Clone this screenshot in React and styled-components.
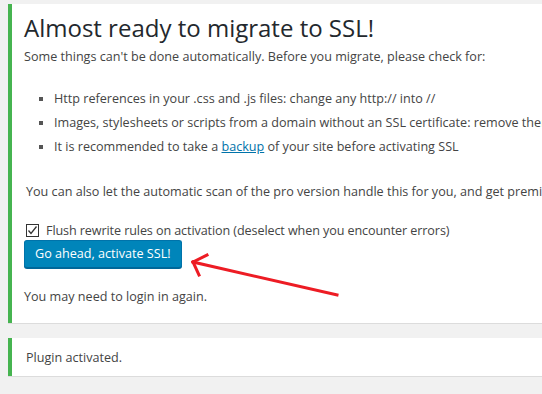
import React from "react";
import styled, { createGlobalStyle } from "styled-components";

const GlobalStyle = createGlobalStyle`
  html, body {
    margin: 0;
    padding: 0;
    background: #f1f1f1;
    overflow: hidden;
  }
  body {
    font-family: "Open Sans", "Noto Sans", sans-serif;
    font-size: 12.6px;
    color: #444;
  }
`;

const Page = styled.div`
  position: relative;
  width: 900px;
  height: 394px;
  padding: 4px 0 0 8px;
  box-sizing: border-box;
`;

const Notice = styled.div`
  background: #fff;
  border-left: 4px solid #46b450;
  box-shadow: 0 1px 0 #dcdcdc;
  padding: ${(p) => p.$pad || "0 12px 16px"};
  display: flex;
  flex-direction: column;
  align-items: flex-start;
  margin-top: ${(p) => p.$mt || "0"};
`;

const Title = styled.h1`
  font-size: 24px;
  font-weight: 400;
  line-height: 30px;
  color: #23282d;
  margin: 9px 0 0;
`;

const Text = styled.p`
  margin: ${(p) => p.$m || "0"};
  line-height: 20px;
  padding-left: ${(p) => p.$indent || "0"};
  white-space: nowrap;
`;

const List = styled.ul`
  margin: 22px 0 0;
  padding: 0 0 0 30px;
  list-style: square;
`;

const Item = styled.li`
  line-height: 20px;
  margin-bottom: 4px;
  white-space: nowrap;
  &::marker {
    color: #555;
  }
`;

const Link = styled.a`
  color: #0073aa;
  text-decoration: underline;
`;

const CheckRow = styled.label`
  display: flex;
  align-items: center;
  gap: 7px;
  margin-top: 18px;
  height: 20px;
  padding-left: 2px;
  letter-spacing: -0.1px;
`;

const Box = styled.span`
  width: 11px;
  height: 11px;
  border: 1px solid #333;
  display: inline-flex;
  align-items: center;
  justify-content: center;
  background: #fff;
`;

const Button = styled.button`
  height: 28px;
  padding: 0 10px 2px;
  background: #0085ba;
  border: 1px solid #0073aa;
  border-bottom-color: #006799;
  box-shadow: 0 1px 0 #006799;
  border-radius: 3px;
  color: #fff;
  font-family: inherit;
  font-size: 12.6px;
  cursor: pointer;
`;

const Arrow = styled.svg`
  position: absolute;
  left: 0;
  top: 0;
  pointer-events: none;
`;

export default function App() {
  return (
    <>
      <GlobalStyle />
      <Page>
        <Notice>
          <Title>Almost ready to migrate to SSL!</Title>
          <Text $m="4px 0 0">
            Some things can't be done automatically. Before you migrate, please check for:
          </Text>
          <List>
            <Item>Http references in your .css and .js files: change any http:// into //</Item>
            <Item>
              Images, stylesheets or scripts from a domain without an SSL certificate: remove them or move to your own server.
            </Item>
            <Item>
              It is recommended to take a <Link href="#">backup</Link> of your site before activating SSL
            </Item>
          </List>
          <Text $m="21px 0 0" $indent="2px">
            You can also let the automatic scan of the pro version handle this for you, and get premium support and increased security.
          </Text>
          <CheckRow>
            <Box>
              <svg width="11" height="11" viewBox="0 0 11 11">
                <path d="M1.5 5.5 L4 8.5 L9.5 1.5" fill="none" stroke="#333" strokeWidth="1.3" />
              </svg>
            </Box>
            Flush rewrite rules on activation (deselect when you encounter errors)
          </CheckRow>
          <Button>Go ahead, activate SSL!</Button>
          <Text $m="19px 0 0">You may need to login in again.</Text>
        </Notice>
        <Notice $mt="15px" $pad="10px 14px 8px">
          <Text>Plugin activated.</Text>
        </Notice>
        <Arrow width="542" height="394" viewBox="0 0 542 394">
          <g stroke="#ed1c24" strokeWidth="3" fill="none" strokeLinecap="square">
            <line x1="193" y1="262" x2="337" y2="295" />
            <line x1="193" y1="262" x2="207" y2="255" />
            <line x1="193" y1="262" x2="199" y2="275" />
          </g>
        </Arrow>
      </Page>
    </>
  );
}
